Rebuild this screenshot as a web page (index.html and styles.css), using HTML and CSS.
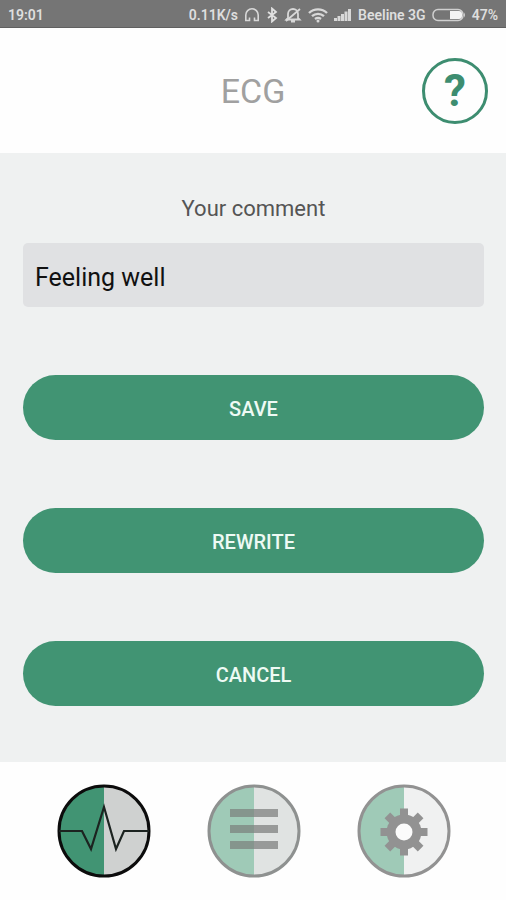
FILE: index.html
```html
<!DOCTYPE html>
<html lang="en">
<head>
    <meta charset="UTF-8">
    <meta name="viewport" content="width=device-width, initial-scale=1.0">
    <title>ECG</title>
    <link rel="stylesheet" href="styles.css">
</head>
<body>
    <div class="status-bar">
        <span class="time">19:01</span>
        <span>0.11K/s</span>
        <svg width="16" height="16" viewBox="0 0 16 16" fill="none" stroke="#d8d8d8" stroke-width="1.6">
            <path d="M1.800 14V8a6.200 6.200 0 0 1 12.400 0v6"/>
            <path d="M1 13.500h4.500V10.500M15 13.500h-4.500V10.500"/>
        </svg>
        <svg width="12" height="16" viewBox="0 0 12 16" fill="none" stroke="#e0e0e0" stroke-width="1.8">
            <path d="M2 5l8 6-4 3.500V1.500L10 5l-8 6"/>
        </svg>
        <svg width="18" height="16" viewBox="0 0 18 16" fill="none" stroke="#d8d8d8" stroke-width="1.8">
            <path d="M4 11V7a5 5 0 0 1 10 0v4l1.500 1.500h-13zM7 14.500h4"/>
            <path d="M2 14L16 2"/>
        </svg>
        <svg width="20" height="16" viewBox="0 0 20 16" fill="none" stroke="#d8d8d8" stroke-width="2.400">
            <path d="M1 6a13 13 0 0 1 18 0M4 9.200a9 9 0 0 1 12 0M7 12a5 5 0 0 1 6 0"/>
            <circle cx="10" cy="14" r="1.500" fill="#d8d8d8" stroke="none"/>
        </svg>
        <svg width="18" height="16" viewBox="0 0 18 16" fill="#d8d8d8">
            <path d="M0 11h3v3H0zM3.500 9h3v5h-3zM7 7h3v7H7zM10.500 4.500h3V14h-3zM14 2h3v12h-3z"/>
        </svg>
        <span>Beeline 3G</span>
        <svg width="34" height="14" viewBox="0 0 34 14">
            <rect x="1" y="1.500" width="30" height="11" rx="5" fill="none" stroke="#d0d0d0" stroke-width="1.5"/>
            <path d="M18 3h9a3 3 0 0 1 3 3v2a3 3 0 0 1-3 3h-9z" fill="#f4f4f4"/>
            <path d="M32 4.500q2 2.500 0 5z" fill="#d0d0d0"/>
        </svg>
        <span>47%</span>
    </div>

    <header class="header">
        <h1>ECG</h1>
        <button class="help" type="button" aria-label="Help">?</button>
    </header>

    <main class="content">
        <label for="comment">Your comment</label>
        <input type="text" id="comment" value="Feeling well">

        <div class="actions">
            <button class="btn" type="button">SAVE</button>
            <button class="btn" type="button">REWRITE</button>
            <button class="btn" type="button">CANCEL</button>
        </div>
    </main>

    <nav class="tabs">
        <a href="#ecg" aria-label="ECG">
            <svg width="94" height="94" viewBox="0 0 94 94">
                <circle cx="47" cy="47" r="45" fill="#cfd1d0"/>
                <path d="M47 2a45 45 0 0 0 0 90z" fill="#419473"/>
                <circle cx="47" cy="47" r="45" fill="none" stroke="#0c0c0c" stroke-width="3"/>
                <path d="M2 47h23l9 18 13-42 12 42 8-18h25" fill="none" stroke="#1c2320" stroke-width="2.2"/>
            </svg>
        </a>
        <a href="#list" aria-label="List">
            <svg width="94" height="94" viewBox="0 0 94 94">
                <circle cx="47" cy="47" r="45" fill="#e0e3e2"/>
                <path d="M47 2a45 45 0 0 0 0 90z" fill="#9fcab7"/>
                <circle cx="47" cy="47" r="45" fill="none" stroke="#8e9190" stroke-width="3"/>
                <path d="M23 25h24v8H23zM23 41h24v8H23zM23 57h24v8H23z" fill="#85958d"/>
                <path d="M47 25h24v8H47zM47 41h24v8H47zM47 57h24v8H47z" fill="#989a99"/>
            </svg>
        </a>
        <a href="#settings" aria-label="Settings">
            <svg width="94" height="94" viewBox="0 0 94 94">
                <circle cx="47" cy="47" r="45" fill="#f0f1f1"/>
                <path d="M47 2a45 45 0 0 0 0 90z" fill="#9fcab7"/>
                <circle cx="47" cy="47" r="45" fill="none" stroke="#929292" stroke-width="3"/>
                <g fill="#929292">
                    <circle cx="47" cy="48" r="17.500"/>
                    <rect x="43" y="24.500" width="8" height="47"/>
                    <rect x="43" y="24.500" width="8" height="47" transform="rotate(45 47 48)"/>
                    <rect x="43" y="24.500" width="8" height="47" transform="rotate(90 47 48)"/>
                    <rect x="43" y="24.500" width="8" height="47" transform="rotate(135 47 48)"/>
                </g>
                <circle cx="47" cy="48" r="8.500" fill="#fbfbfb"/>
            </svg>
        </a>
    </nav>
</body>
</html>
```

FILE: styles.css
```css
* {
    box-sizing: border-box;
}
body {
    display: flex;
    flex-direction: column;
    min-height: 100vh;
    margin: 0;
    font-family: Roboto, "Liberation Sans", sans-serif;
    background-color: #fefefe;
}
.status-bar {
    display: flex;
    align-items: center;
    gap: 6px;
    height: 28px;
    padding: 2px 8px 0;
    background-color: #757575;
    border-bottom: 1px solid #606060;
    color: #dedede;
    font-size: 14px;
    font-weight: 600;
    white-space: nowrap;
}
.status-bar svg {
    flex: none;
}
.time {
    margin-right: auto;
}
.header {
    display: grid;
    grid-template-columns: 1fr auto 1fr;
    align-items: center;
    height: 125px;
    padding: 0 18px;
}
h1 {
    grid-column: 2;
    margin: 0;
    color: #a0a0a0;
    font-size: 34px;
    font-weight: 400;
}
.help {
    justify-self: end;
    width: 66px;
    height: 66px;
    padding: 0;
    border: 3px solid #3d8d70;
    border-radius: 50%;
    background: none;
    color: #3d8d70;
    font-family: inherit;
    font-size: 44px;
    font-weight: bold;
    line-height: 60px;
}
.content {
    flex: 1;
    padding: 40px 22px 56px 23px;
    background-color: #eff1f1;
}
label {
    display: block;
    margin-bottom: 18px;
    color: #555;
    font-size: 22px;
    line-height: 32px;
    text-align: center;
}
input {
    display: block;
    width: 100%;
    height: 64px;
    padding: 4px 12px 0;
    border: none;
    border-radius: 5px;
    background-color: #e0e1e3;
    color: #111;
    font-family: inherit;
    font-size: 25px;
}
.actions {
    display: flex;
    flex-direction: column;
    gap: 68px;
    margin-top: 68px;
}
.btn {
    height: 65px;
    padding: 2px 0 0;
    border: none;
    border-radius: 33px;
    background-color: #419473;
    color: #eefaf4;
    font-family: inherit;
    font-size: 20px;
    font-weight: 500;
    cursor: pointer;
}
.tabs {
    display: grid;
    grid-template-columns: repeat(3, 1fr);
    justify-items: center;
    align-items: center;
    height: 138px;
    padding: 0 27px 0 29px;
}
.tabs svg {
    display: block;
}
```
